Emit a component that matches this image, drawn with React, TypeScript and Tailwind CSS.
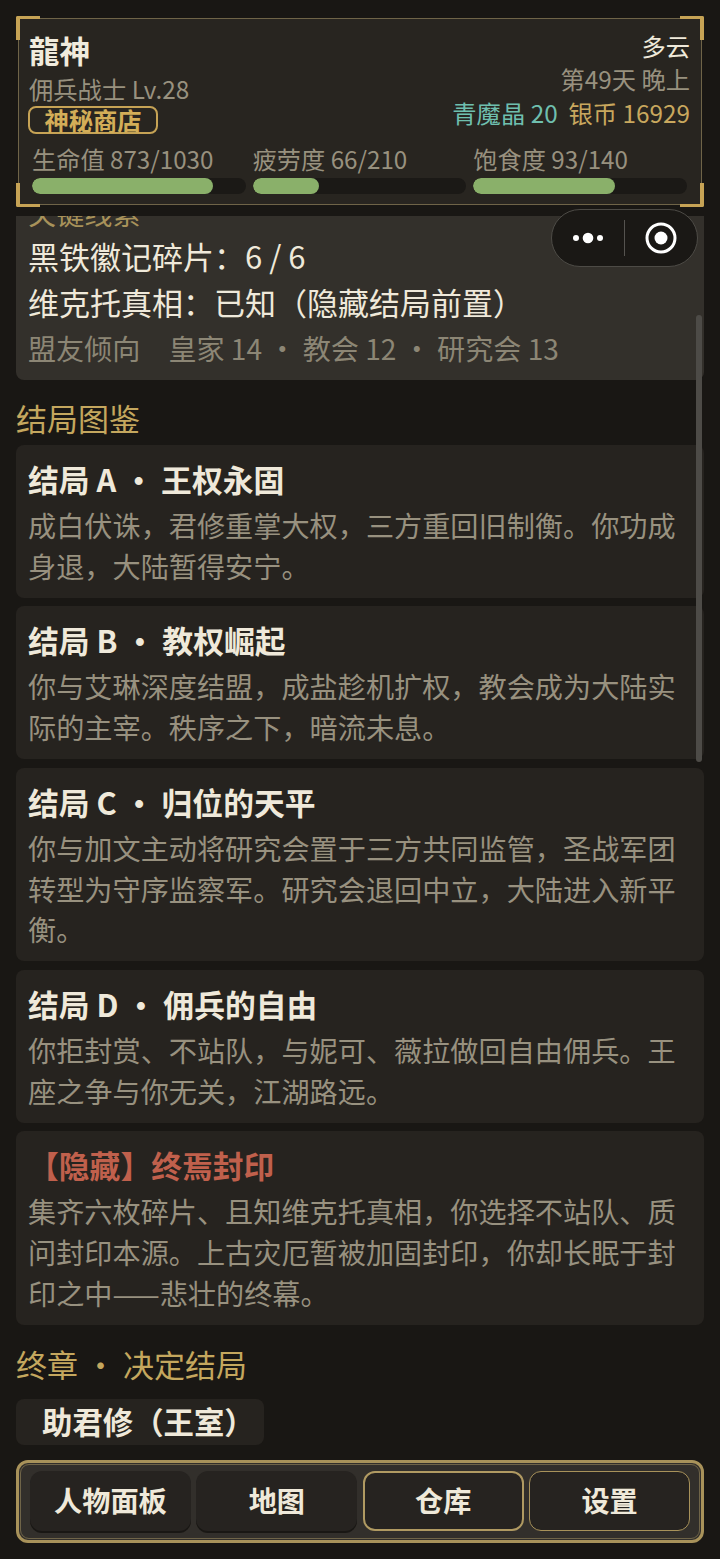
import React from "react";

const FONT = { fontFamily: '"Noto Sans CJK SC", "Noto Sans CJK JP", sans-serif' };

function Corner({ className }: { className: string }) {
  return <div className={"absolute h-[24px] w-[24px] border-[#c6a355] " + className} />;
}

function Stat({ label, pct }: { label: string; pct: number }) {
  return (
    <div className="flex min-w-0 flex-1 flex-col">
      <div className="h-[36px] text-[24.2px] leading-[36px] text-[#98917f] whitespace-nowrap">{label}</div>
      <div className="mt-[1px] h-[16px] overflow-hidden rounded-full bg-[#1b1916]">
        <div className="h-full rounded-full bg-[#8ab06a]" style={{ width: `${pct}%` }} />
      </div>
    </div>
  );
}

function Ending({ title, text, hidden }: { title: string; text: string; hidden?: boolean }) {
  return (
    <div className="rounded-[8px] bg-[#26231f] px-[12px] pt-[9px] pb-[11px]">
      <div className={"mb-[2px] text-[30.8px] font-bold leading-[49px] whitespace-pre " + (hidden ? "text-[#c0604c]" : "text-[#efe9da]")}>{title}</div>
      <div className="text-[28.16px] leading-[40.9px] text-[#98917f]">{text}</div>
    </div>
  );
}

function NavBtn({ label, border }: { label: string; border?: string }) {
  return (
    <div className={"flex h-[60px] items-center justify-center rounded-[12px] bg-[#262320] pb-[2px] text-[28.16px] font-bold text-[#efe9da] " + (border ?? "shadow-[0_2px_0_#191714]")}>
      {label}
    </div>
  );
}

export default function App() {
  return (
    <div style={FONT} className="relative flex h-[1559px] w-[720px] flex-col overflow-hidden bg-[#191714]">
      <header className="h-[216px] shrink-0 p-[16px] pb-[8px]">
        <div className="relative m-[2px] h-[187px] border border-[#6f6448] bg-[#282520] px-[10px] pt-[9px]">
          <Corner className="-left-[3px] -top-[3px] border-l-[4px] border-t-[3px] rounded-tl-[2px]" />
          <Corner className="-right-[3px] -top-[3px] border-r-[4px] border-t-[3px] rounded-tr-[2px]" />
          <Corner className="-left-[3px] -bottom-[3px] border-l-[4px] border-b-[3px] rounded-bl-[2px]" />
          <Corner className="-right-[3px] -bottom-[3px] border-r-[4px] border-b-[3px] rounded-br-[2px]" />
          <div className="flex justify-between">
            <div>
              <div className="text-[30.4px] font-bold leading-[44px] text-[#f0ebdd]" style={{ fontFamily: '"Noto Sans CJK JP", sans-serif' }}>龍神</div>
              <div className="text-[24.3px] leading-[34px] text-[#98917f]">佣兵战士 Lv.28</div>
              <div className="-ml-[1px] flex h-[28px] w-[130px] items-center justify-center rounded-[8px] border-2 border-[#c6a355] text-[24.3px] font-bold leading-none text-[#d3ae58]">神秘商店</div>
            </div>
            <div className="pr-[1px] text-right">
              <div className="pt-[1px] text-[24.3px] leading-[34px] text-[#efe9da]">多云</div>
              <div className="-mt-[1px] text-[24.3px] leading-[34px] text-[#98917f]">第49天 晚上</div>
              <div className="text-[24.3px] leading-[34px] whitespace-pre">
                <span className="text-[#6fbfae]">青魔晶 20</span>
                <span className="text-[#c9a85e]">  银币 16929</span>
              </div>
            </div>
          </div>
          <div className="mt-[7px] flex gap-[7px] pl-[3px] pr-[4px]">
            <Stat label="生命值 873/1030" pct={84.5} />
            <Stat label="疲劳度 66/210" pct={31} />
            <Stat label="饱食度 93/140" pct={66.4} />
          </div>
        </div>
      </header>

      <main className="relative min-h-0 flex-1 overflow-hidden px-[16px]">
        <div className="-mt-[24px] h-[188px] rounded-[8px] bg-[#33302b] px-[12px]">
          <div className="h-[41px] text-[28.16px] leading-[41px] text-[#a8925a]">关键线索</div>
          <div className="text-[31px] leading-[46px] text-[#efe9da]">黑铁徽记碎片：6 / 6</div>
          <div className="text-[31px] leading-[46px] text-[#efe9da]">维克托真相：已知（隐藏结局前置）</div>
          <div className="text-[28.1px] leading-[46px] text-[#8c8675] whitespace-pre">
            盟友倾向<span className="ml-[28px]">皇家 14 ・ 教会 12 ・ 研究会 13</span>
          </div>
        </div>
        <h2 className="h-[65px] text-[31px] font-normal leading-[76px] text-[#c4a75e]">结局图鉴</h2>
        <div className="flex flex-col gap-[8.5px]">
          <Ending title="结局 A ・ 王权永固" text="成白伏诛，君修重掌大权，三方重回旧制衡。你功成身退，大陆暂得安宁。" />
          <Ending title="结局 B ・ 教权崛起" text="你与艾琳深度结盟，成盐趁机扩权，教会成为大陆实际的主宰。秩序之下，暗流未息。" />
          <Ending title="结局 C ・ 归位的天平" text="你与加文主动将研究会置于三方共同监管，圣战军团转型为守序监察军。研究会退回中立，大陆进入新平衡。" />
          <Ending title="结局 D ・ 佣兵的自由" text="你拒封赏、不站队，与妮可、薇拉做回自由佣兵。王座之争与你无关，江湖路远。" />
          <Ending hidden title="【隐藏】终焉封印" text="集齐六枚碎片、且知维克托真相，你选择不站队、质问封印本源。上古灾厄暂被加固封印，你却长眠于封印之中——悲壮的终幕。" />
        </div>
        <h2 className="mt-[16px] h-[58px] text-[31px] font-normal leading-[46px] text-[#c4a75e] whitespace-pre">终章 ・ 决定结局</h2>
        <div className="flex h-[46px] w-[248px] items-center rounded-[8px] bg-[#26231f] pl-[26px] text-[30.4px] font-bold text-[#efe9da] whitespace-nowrap">助君修（王室）</div>

        <div className="absolute right-[18px] top-[99px] h-[447px] w-[6px] rounded-full bg-[#4d4b47]" />
      </main>

      <footer className="shrink-0 px-[16px] pb-[16px]">
        <div className="h-[83px] rounded-[12px] border-[3px] border-[#a8925a] bg-[#322f2b] p-[1px]">
          <div className="grid h-full grid-cols-4 gap-[5.5px] rounded-[9px] border border-[#6f6448] px-[9px] py-[6px]">
            <NavBtn label="人物面板" />
            <NavBtn label="地图" />
            <NavBtn label="仓库" border="border-2 border-[#b09a62]" />
            <NavBtn label="设置" border="border border-[#a8925a]" />
          </div>
        </div>
      </footer>

      <div className="absolute left-[551px] top-[209px] flex h-[58px] w-[147px] items-center rounded-full border border-[#4d4b46] bg-[#1a1815]">
        <div className="flex w-[72px] justify-center">
          <svg width="32" height="12" viewBox="0 0 32 12" fill="#fff">
            <circle cx="4" cy="6" r="3" />
            <circle cx="16" cy="6" r="5.3" />
            <circle cx="28" cy="6" r="3" />
          </svg>
        </div>
        <div className="h-[36px] w-px bg-[#55534f]" />
        <div className="flex flex-1 justify-center">
          <svg width="32" height="32" viewBox="0 0 32 32">
            <circle cx="16" cy="16" r="14" fill="none" stroke="#fff" strokeWidth="3" />
            <circle cx="16" cy="16" r="6.5" fill="#fff" />
          </svg>
        </div>
      </div>
    </div>
  );
}
